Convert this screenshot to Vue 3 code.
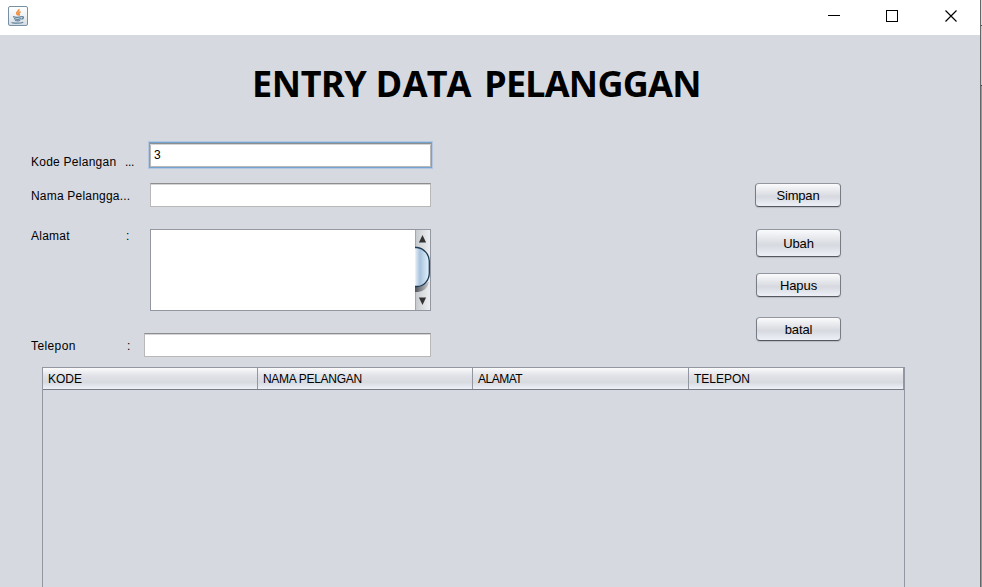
<script setup>
import { ref } from 'vue'

const kode = ref('3')
const nama = ref('')
const alamat = ref('')
const telepon = ref('')
const columns = ['KODE', 'NAMA PELANGAN', 'ALAMAT', 'TELEPON']
const actions = [
  { label: 'Simpan', kind: 'save' },
  { label: 'Ubah', kind: 'edit' },
  { label: 'Hapus', kind: 'remove' },
  { label: 'batal', kind: 'cancel' },
]
</script>

<template>
  <div class="screen">
    <div class="window">
      <header class="titlebar">
        <svg class="java" width="20" height="20" viewBox="0 0 20 20">
          <defs>
            <linearGradient id="tile" x1="0" y1="0" x2="0" y2="1">
              <stop offset="0" stop-color="#ffffff" />
              <stop offset=".5" stop-color="#eef1f4" />
              <stop offset="1" stop-color="#d3dbe2" />
            </linearGradient>
          </defs>
          <rect x=".5" y=".5" width="19" height="19" rx="1.5" fill="url(#tile)" stroke="#7890a4" />
          <path d="M10.8 3.2c.9 1.7-3 2.7-2 4.4.3.7 1 1.1 1.2 1.8M12.6 5.8c-1.9.7-2.4 1.5-1.5 2.3.4.5.2 1-.4 1.4" fill="none" stroke="#ee8b3c" stroke-width="1.6" />
          <path d="M5 10.7c2.2.7 6.2.7 8.5 0M6 12.7c2 .7 5 .7 7 0M7 14.5c1.7.5 3.7.5 5.2 0M13.6 10.7c2.6-.4 2.4 2.1-.3 2.4M4 16.2c-.4 1.3 9 1.4 11.2.1" fill="none" stroke="#5f819b" stroke-width="1.25" />
        </svg>
        <svg class="controls" width="130" height="14" viewBox="0 0 130 14" fill="none" stroke="#000" shape-rendering="crispEdges">
          <path d="M0 6.5h12" />
          <rect x="58.5" y="1.5" width="11" height="11" />
          <path d="M117.5 1.5l11 11M128.5 1.5l-11 11" shape-rendering="auto" stroke-width="1.15" />
        </svg>
      </header>

      <main>
        <h1><span class="w1">ENTRY</span> <span class="w2">DATA</span> <span class="w3">PELANGGAN</span></h1>
        <section class="entry">
          <form class="fields" @submit.prevent>
            <label class="row kode"><span class="name">Kode Pelangan</span><span class="colon">...</span><input v-model="kode" type="text" /></label>
            <label class="row nama"><span class="name">Nama Pelangga...</span><input v-model="nama" type="text" /></label>
            <div class="row alamat">
              <span class="name">Alamat</span><span class="colon">:</span>
              <div class="area">
                <textarea v-model="alamat"></textarea>
                <svg class="scroll" width="15" height="80" viewBox="0 0 15 80">
                  <defs>
                    <linearGradient id="track"><stop offset="0" stop-color="#c3c6ca" /><stop offset=".45" stop-color="#d9dcdf" /><stop offset="1" stop-color="#eceef0" /></linearGradient>
                    <linearGradient id="thumb"><stop offset="0" stop-color="#eef6fc" /><stop offset=".12" stop-color="#d0e0ef" /><stop offset=".35" stop-color="#a9c1da" /><stop offset=".6" stop-color="#bfd7eb" /><stop offset="1" stop-color="#e2f3fd" /></linearGradient>
                    <linearGradient id="shade"><stop offset="0" stop-color="#50545a" /><stop offset="1" stop-color="#c9ccd0" /></linearGradient>
                  </defs>
                  <rect width="15" height="80" fill="url(#track)" />
                  <path d="M.5 0v80" stroke="#a4a7ae" />
                  <path d="M0 56v6h3q9-1 11-10z" fill="url(#shade)" />
                  <path d="M0 17.5h2C9 18 14.3 25 14.3 31v12C14.3 50 9 56.5 2 56.5H0" fill="url(#thumb)" stroke="#1e3b56" stroke-width="1.3" />
                  <path d="M7.5 5l3.6 7.5H3.900zM7.5 75l3.6-7.5H3.900z" fill="#333" />
                </svg>
              </div>
            </div>
            <label class="row telepon"><span class="name">Telepon</span><span class="colon">:</span><input v-model="telepon" type="text" /></label>
          </form>
          <div class="actions">
            <button v-for="action in actions" :key="action.kind" type="button" :class="action.kind">{{ action.label }}</button>
          </div>
        </section>
        <section class="table">
          <div class="head">
            <div v-for="column in columns" :key="column" class="cell">{{ column }}</div>
          </div>
        </section>
      </main>
    </div>
    <aside class="edge"></aside>
  </div>
</template>

<style>
body { margin: 0; overflow: hidden; }
</style>

<style scoped>
* { box-sizing: border-box; }
.screen { display: flex; width: 982px; height: 587px; overflow: hidden; background: #d6d9e0; font: 12px/14px "Liberation Sans", Arial, sans-serif; color: #000; }
.window { display: flex; flex-direction: column; width: 980px; }
.edge { width: 2px; border-left: 1px solid #666; background: linear-gradient(#ddd 0 25px, #555 25px 26px, #ccc 26px 85px, #444 85px 86px, #999 86px); }
.titlebar { display: flex; justify-content: space-between; height: 35px; flex: none; padding: 6px 22px 0 8px; background: #fff; }
.controls { margin-top: 3px; }
main { display: flex; flex: 1; min-height: 0; flex-direction: column; }
h1 { margin: 24px 0 0 252px; height: 50px; font: bold 36px/50px "Noto Sans", "Open Sans", sans-serif; white-space: nowrap; width: max-content; }
.w1 { letter-spacing: -.4px; }
.w2 { letter-spacing: 1.5px; }
.w3 { margin-left: 2px; letter-spacing: -.75px; }
.entry { display: flex; justify-content: space-between; height: 225px; flex: none; margin-top: 33px; padding: 0 139px 0 31px; }
.fields { width: 401px; }
.row { display: flex; width: 401px; letter-spacing: .25px; }
.name { width: 95px; flex: none; white-space: nowrap; }
.colon { width: 24px; flex: none; letter-spacing: 0; }
input { width: 281px; height: 24px; margin: 0; padding: 0 4px; flex: none; border: 1px solid #b8b8b8; border-top-color: #8d8d8d; border-radius: 0; outline: 0; background: #fff; box-shadow: inset 0 1px #d4d4d4; font: inherit; color: inherit; }
.kode input { width: 283px; height: 26px; margin-left: -1px; border-color: #73a4d1; box-shadow: 0 0 0 1px #b3c8e0, inset 0 1px #8d8d8d, inset 0 2px #d4d4d4, inset 0 0 0 1px #b8b8b8; }
.kode .name { width: 94px; }
.kode .colon { width: 25px; letter-spacing: -.3px; }
.kode .name, .kode .colon { padding-top: 13px; }
.nama { margin-top: 14px; }
.nama .name { width: 119px; padding-top: 6px; letter-spacing: .2px; }
.alamat { margin-top: 22px; }
.area { display: flex; width: 281px; height: 82px; border: 1px solid #9297a1; background: #fff; }
textarea { flex: 1; min-width: 0; padding: 4px; border: 0; outline: 0; resize: none; background: #fff; font: inherit; }
.scroll { width: 15px; flex: none; }
.telepon { margin-top: 22px; }
.telepon .name { width: 96px; padding-top: 6px; letter-spacing: .4px; }
.telepon .colon { width: 17px; padding-top: 6px; }
.telepon input { width: 287px; }
.actions { display: flex; flex-direction: column; align-items: flex-end; padding-top: 41px; }
button { width: 85px; height: 24px; padding: 0; border: 1px solid; border-color: #92969d #777c85 #535861; border-radius: 4px; background: linear-gradient(#fbfbfd, #e4e6ea 35%, #d6d9df 58%, #edf0f7); box-shadow: 0 1px 1px #b9bcc3; font: 13px/15px "Liberation Sans", Arial, sans-serif; letter-spacing: -.1px; color: #000; }
.save { width: 86px; letter-spacing: -.2px; }
.edit { height: 28px; margin-top: 22px; padding-top: 1px; }
.remove { margin-top: 16px; }
.cancel { margin-top: 20px; }
.table { flex: 1; width: 863px; margin-left: 42px; border: solid #9297a1; border-width: 1px 1px 0; }
.head { display: grid; grid-template-columns: 215px 215px 216px 215px; height: 22px; border-bottom: 1px solid #777c86; background: linear-gradient(#fbfbfc, #e2e3e8 35%, #d7dadf 68%, #eef1f7); }
.cell { padding: 4px 5px 0; border-right: 1px solid #9297a1; }
.cell:nth-child(2) { letter-spacing: -.3px; }
.cell:nth-child(3) { letter-spacing: -.5px; }
</style>
